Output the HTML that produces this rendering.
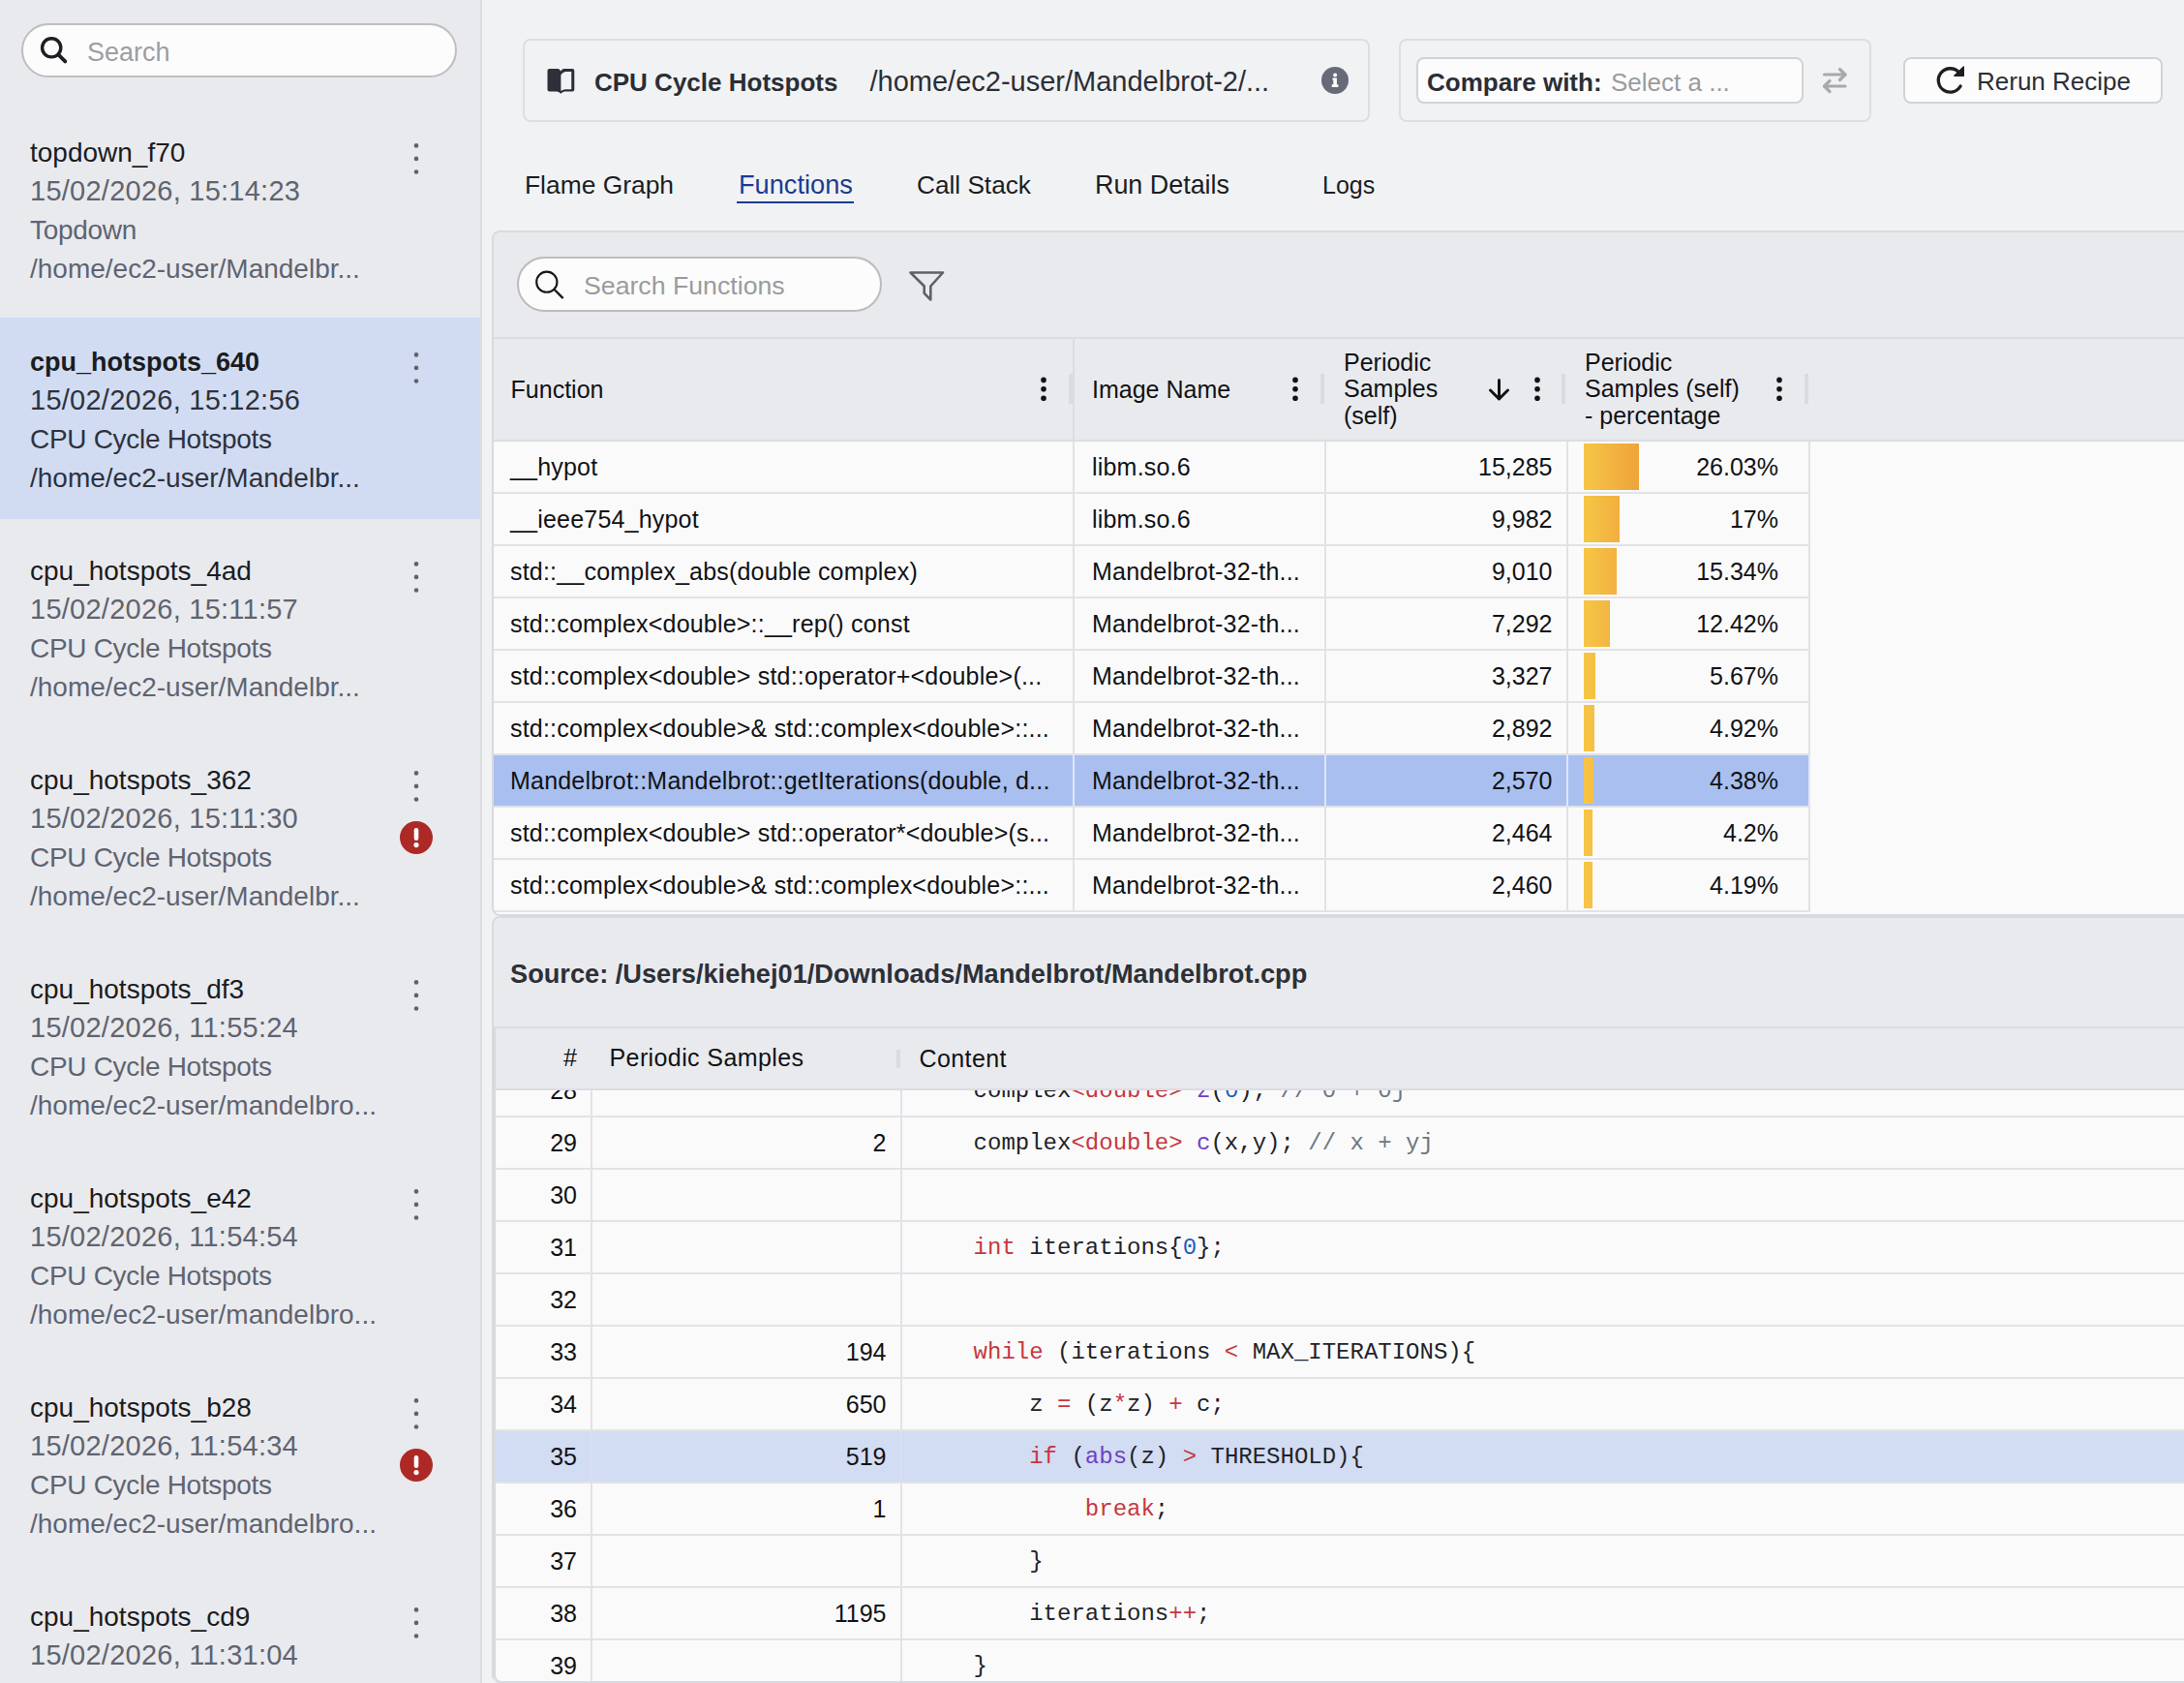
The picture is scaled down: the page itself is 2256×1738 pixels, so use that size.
<!DOCTYPE html><html><head><meta charset="utf-8"><style>
html,body{margin:0;padding:0;overflow:hidden;}
body{width:2256px;height:1738px;overflow:hidden;position:relative;background:#f1f2f4;font-family:"Liberation Sans",sans-serif;}
.t{position:absolute;white-space:pre;}
.b{position:absolute;box-sizing:border-box;}
svg{position:absolute;overflow:visible;}
</style></head><body>
<div class="b" style="left:0px;top:0px;width:496px;height:1738px;background:#e9eaee;"></div>
<div class="b" style="left:496px;top:0px;width:2px;height:1738px;background:#dcdde1;"></div>
<div class="b" style="left:22px;top:24px;width:450px;height:56px;background:#fcfcfd;border:2px solid #bebec0;border-radius:28px;"></div>
<div class="t" style="left:90.00px;top:36.64px;font-size:27px;line-height:34px;color:#9d9ea2;font-weight:400;font-family:'Liberation Sans', sans-serif;">Search</div>
<div class="t" style="left:31.00px;top:139.79px;font-size:28px;line-height:35px;color:#1b1c20;font-weight:400;font-family:'Liberation Sans', sans-serif;">topdown_f70</div>
<div class="t" style="left:31.00px;top:178.95px;font-size:29px;line-height:36px;color:#5f6470;font-weight:400;font-family:'Liberation Sans', sans-serif;letter-spacing:0.25px;">15/02/2026, 15:14:23</div>
<div class="t" style="left:31.00px;top:219.79px;font-size:28px;line-height:35px;color:#5f6470;font-weight:400;font-family:'Liberation Sans', sans-serif;letter-spacing:-0.3px;">Topdown</div>
<div class="t" style="left:31.00px;top:259.79px;font-size:28px;line-height:35px;color:#5f6470;font-weight:400;font-family:'Liberation Sans', sans-serif;">/home/ec2-user/Mandelbr...</div>
<div class="b" style="left:0px;top:328px;width:496px;height:208px;background:#d1dcf3;"></div>
<div class="t" style="left:31.00px;top:356.64px;font-size:27px;line-height:34px;color:#1b1c20;font-weight:700;font-family:'Liberation Sans', sans-serif;">cpu_hotspots_640</div>
<div class="t" style="left:31.00px;top:394.95px;font-size:29px;line-height:36px;color:#2e323b;font-weight:400;font-family:'Liberation Sans', sans-serif;letter-spacing:0.25px;">15/02/2026, 15:12:56</div>
<div class="t" style="left:31.00px;top:435.79px;font-size:28px;line-height:35px;color:#2e323b;font-weight:400;font-family:'Liberation Sans', sans-serif;letter-spacing:-0.3px;">CPU Cycle Hotspots</div>
<div class="t" style="left:31.00px;top:475.79px;font-size:28px;line-height:35px;color:#2e323b;font-weight:400;font-family:'Liberation Sans', sans-serif;">/home/ec2-user/Mandelbr...</div>
<div class="t" style="left:31.00px;top:571.79px;font-size:28px;line-height:35px;color:#1b1c20;font-weight:400;font-family:'Liberation Sans', sans-serif;">cpu_hotspots_4ad</div>
<div class="t" style="left:31.00px;top:610.95px;font-size:29px;line-height:36px;color:#5f6470;font-weight:400;font-family:'Liberation Sans', sans-serif;letter-spacing:0.25px;">15/02/2026, 15:11:57</div>
<div class="t" style="left:31.00px;top:651.79px;font-size:28px;line-height:35px;color:#5f6470;font-weight:400;font-family:'Liberation Sans', sans-serif;letter-spacing:-0.3px;">CPU Cycle Hotspots</div>
<div class="t" style="left:31.00px;top:691.79px;font-size:28px;line-height:35px;color:#5f6470;font-weight:400;font-family:'Liberation Sans', sans-serif;">/home/ec2-user/Mandelbr...</div>
<div class="t" style="left:31.00px;top:787.79px;font-size:28px;line-height:35px;color:#1b1c20;font-weight:400;font-family:'Liberation Sans', sans-serif;">cpu_hotspots_362</div>
<div class="t" style="left:31.00px;top:826.95px;font-size:29px;line-height:36px;color:#5f6470;font-weight:400;font-family:'Liberation Sans', sans-serif;letter-spacing:0.25px;">15/02/2026, 15:11:30</div>
<div class="t" style="left:31.00px;top:867.79px;font-size:28px;line-height:35px;color:#5f6470;font-weight:400;font-family:'Liberation Sans', sans-serif;letter-spacing:-0.3px;">CPU Cycle Hotspots</div>
<div class="t" style="left:31.00px;top:907.79px;font-size:28px;line-height:35px;color:#5f6470;font-weight:400;font-family:'Liberation Sans', sans-serif;">/home/ec2-user/Mandelbr...</div>
<div class="t" style="left:31.00px;top:1003.79px;font-size:28px;line-height:35px;color:#1b1c20;font-weight:400;font-family:'Liberation Sans', sans-serif;">cpu_hotspots_df3</div>
<div class="t" style="left:31.00px;top:1042.95px;font-size:29px;line-height:36px;color:#5f6470;font-weight:400;font-family:'Liberation Sans', sans-serif;letter-spacing:0.25px;">15/02/2026, 11:55:24</div>
<div class="t" style="left:31.00px;top:1083.79px;font-size:28px;line-height:35px;color:#5f6470;font-weight:400;font-family:'Liberation Sans', sans-serif;letter-spacing:-0.3px;">CPU Cycle Hotspots</div>
<div class="t" style="left:31.00px;top:1123.79px;font-size:28px;line-height:35px;color:#5f6470;font-weight:400;font-family:'Liberation Sans', sans-serif;">/home/ec2-user/mandelbro...</div>
<div class="t" style="left:31.00px;top:1219.79px;font-size:28px;line-height:35px;color:#1b1c20;font-weight:400;font-family:'Liberation Sans', sans-serif;">cpu_hotspots_e42</div>
<div class="t" style="left:31.00px;top:1258.95px;font-size:29px;line-height:36px;color:#5f6470;font-weight:400;font-family:'Liberation Sans', sans-serif;letter-spacing:0.25px;">15/02/2026, 11:54:54</div>
<div class="t" style="left:31.00px;top:1299.79px;font-size:28px;line-height:35px;color:#5f6470;font-weight:400;font-family:'Liberation Sans', sans-serif;letter-spacing:-0.3px;">CPU Cycle Hotspots</div>
<div class="t" style="left:31.00px;top:1339.79px;font-size:28px;line-height:35px;color:#5f6470;font-weight:400;font-family:'Liberation Sans', sans-serif;">/home/ec2-user/mandelbro...</div>
<div class="t" style="left:31.00px;top:1435.79px;font-size:28px;line-height:35px;color:#1b1c20;font-weight:400;font-family:'Liberation Sans', sans-serif;">cpu_hotspots_b28</div>
<div class="t" style="left:31.00px;top:1474.95px;font-size:29px;line-height:36px;color:#5f6470;font-weight:400;font-family:'Liberation Sans', sans-serif;letter-spacing:0.25px;">15/02/2026, 11:54:34</div>
<div class="t" style="left:31.00px;top:1515.79px;font-size:28px;line-height:35px;color:#5f6470;font-weight:400;font-family:'Liberation Sans', sans-serif;letter-spacing:-0.3px;">CPU Cycle Hotspots</div>
<div class="t" style="left:31.00px;top:1555.79px;font-size:28px;line-height:35px;color:#5f6470;font-weight:400;font-family:'Liberation Sans', sans-serif;">/home/ec2-user/mandelbro...</div>
<div class="t" style="left:31.00px;top:1651.79px;font-size:28px;line-height:35px;color:#1b1c20;font-weight:400;font-family:'Liberation Sans', sans-serif;">cpu_hotspots_cd9</div>
<div class="t" style="left:31.00px;top:1690.95px;font-size:29px;line-height:36px;color:#5f6470;font-weight:400;font-family:'Liberation Sans', sans-serif;letter-spacing:0.25px;">15/02/2026, 11:31:04</div>
<div class="t" style="left:31.00px;top:1731.79px;font-size:28px;line-height:35px;color:#5f6470;font-weight:400;font-family:'Liberation Sans', sans-serif;letter-spacing:-0.3px;">CPU Cycle Hotspots</div>
<div class="t" style="left:31.00px;top:1771.79px;font-size:28px;line-height:35px;color:#5f6470;font-weight:400;font-family:'Liberation Sans', sans-serif;">/home/ec2-user/mandelbro...</div>
<div class="b" style="left:540px;top:40px;width:875px;height:86px;background:transparent;border:2px solid #dddee2;border-radius:8px;"></div>
<div class="t" style="left:614.00px;top:68.69px;font-size:26px;line-height:32px;color:#2b2e35;font-weight:700;font-family:'Liberation Sans', sans-serif;">CPU Cycle Hotspots</div>
<div class="t" style="left:898.50px;top:66.35px;font-size:29px;line-height:36px;color:#2b2e35;font-weight:400;font-family:'Liberation Sans', sans-serif;">/home/ec2-user/Mandelbrot-2/...</div>
<div class="b" style="left:1445px;top:40px;width:488px;height:86px;background:transparent;border:2px solid #dddee2;border-radius:8px;"></div>
<div class="b" style="left:1463px;top:59px;width:400px;height:48px;background:#fcfcfd;border:2px solid #d2d3d7;border-radius:8px;"></div>
<div class="t" style="left:1474.00px;top:69.29px;font-size:26px;line-height:32px;color:#2b2e35;font-weight:700;font-family:'Liberation Sans', sans-serif;">Compare with:</div>
<div class="t" style="left:1664.00px;top:69.29px;font-size:26px;line-height:32px;color:#9a9b9e;font-weight:400;font-family:'Liberation Sans', sans-serif;">Select a ...</div>
<div class="b" style="left:1966px;top:59px;width:268px;height:48px;background:#fcfcfd;border:2px solid #d2d3d7;border-radius:8px;"></div>
<div class="t" style="left:2042.00px;top:67.99px;font-size:26px;line-height:32px;color:#2b2e35;font-weight:400;font-family:'Liberation Sans', sans-serif;">Rerun Recipe</div>
<div class="t" style="left:542.00px;top:174.55px;font-size:26.4px;line-height:33px;color:#1c1d21;font-weight:400;font-family:'Liberation Sans', sans-serif;">Flame Graph</div>
<div class="t" style="left:763.00px;top:173.77px;font-size:27.2px;line-height:34px;color:#1d3a90;font-weight:400;font-family:'Liberation Sans', sans-serif;">Functions</div>
<div class="b" style="left:761px;top:208px;width:121px;height:2px;background:#1d3a90;"></div>
<div class="t" style="left:947.00px;top:174.62px;font-size:26.2px;line-height:33px;color:#1c1d21;font-weight:400;font-family:'Liberation Sans', sans-serif;">Call Stack</div>
<div class="t" style="left:1131.00px;top:173.87px;font-size:26.9px;line-height:34px;color:#1c1d21;font-weight:400;font-family:'Liberation Sans', sans-serif;">Run Details</div>
<div class="t" style="left:1366.00px;top:176.03px;font-size:25px;line-height:31px;color:#1c1d21;font-weight:400;font-family:'Liberation Sans', sans-serif;">Logs</div>
<div style="position:absolute;left:0;top:0;width:2400px;height:1738px;clip-path:inset(238px 0 792px 508px round 8px)">
<div class="b" style="left:508px;top:238px;width:1800px;height:708px;background:#e9eaee;"></div>
<div class="b" style="left:534px;top:265px;width:377px;height:57px;background:#fcfcfc;border:2px solid #bcbcbe;border-radius:28.5px;"></div>
<div class="t" style="left:603.00px;top:278.94px;font-size:26.7px;line-height:33px;color:#9a9b9e;font-weight:400;font-family:'Liberation Sans', sans-serif;">Search Functions</div>
<div class="b" style="left:510px;top:348px;width:1746px;height:2px;background:#dcdde2;"></div>
<div class="b" style="left:510px;top:350px;width:1746px;height:104px;background:#e9eaee;"></div>
<div class="b" style="left:510px;top:454px;width:1746px;height:2px;background:#dcdde2;"></div>
<div class="b" style="left:1108px;top:350px;width:2px;height:104px;background:#dcdde2;"></div>
<div class="t" style="left:527.60px;top:386.63px;font-size:25px;line-height:31px;color:#111214;font-weight:400;font-family:'Liberation Sans', sans-serif;">Function</div>
<div class="t" style="left:1128.00px;top:386.83px;font-size:25px;line-height:31px;color:#111214;font-weight:400;font-family:'Liberation Sans', sans-serif;">Image Name</div>
<div class="t" style="left:1388.00px;top:358.83px;font-size:25px;line-height:31px;color:#111214;font-weight:400;font-family:'Liberation Sans', sans-serif;">Periodic</div>
<div class="t" style="left:1388.00px;top:386.43px;font-size:25px;line-height:31px;color:#111214;font-weight:400;font-family:'Liberation Sans', sans-serif;">Samples</div>
<div class="t" style="left:1388.00px;top:414.03px;font-size:25px;line-height:31px;color:#111214;font-weight:400;font-family:'Liberation Sans', sans-serif;">(self)</div>
<div class="t" style="left:1637.00px;top:358.53px;font-size:25px;line-height:31px;color:#111214;font-weight:400;font-family:'Liberation Sans', sans-serif;">Periodic</div>
<div class="t" style="left:1637.00px;top:386.13px;font-size:25px;line-height:31px;color:#111214;font-weight:400;font-family:'Liberation Sans', sans-serif;">Samples (self)</div>
<div class="t" style="left:1637.00px;top:414.13px;font-size:25px;line-height:31px;color:#111214;font-weight:400;font-family:'Liberation Sans', sans-serif;">- percentage</div>
<div class="b" style="left:1104px;top:386px;width:4px;height:31px;background:#dadbdf;"></div>
<div class="b" style="left:1364px;top:386px;width:4px;height:31px;background:#dadbdf;"></div>
<div class="b" style="left:1613px;top:386px;width:4px;height:31px;background:#dadbdf;"></div>
<div class="b" style="left:1864px;top:386px;width:4px;height:31px;background:#dadbdf;"></div>
<div class="b" style="left:510px;top:456px;width:1746px;height:488px;background:#fafafb;"></div>
<div class="b" style="left:510px;top:508px;width:1360px;height:2px;background:#e2e3e7;"></div>
<div class="t" style="left:527.00px;top:466.83px;font-size:25px;line-height:31px;color:#111214;font-weight:400;font-family:'Liberation Sans', sans-serif;letter-spacing:0.2px;">__hypot</div>
<div class="t" style="left:1128.00px;top:466.83px;font-size:25px;line-height:31px;color:#111214;font-weight:400;font-family:'Liberation Sans', sans-serif;letter-spacing:0.2px;">libm.so.6</div>
<div class="t" style="left:403.50px;width:1200px;text-align:right;top:466.83px;font-size:25px;line-height:31px;color:#111214;font-weight:400;font-family:'Liberation Sans', sans-serif;">15,285</div>
<div class="b" style="left:1636px;top:458px;width:57px;height:48px;background:linear-gradient(90deg,#f6c646,#efa33b);background-size:57px 100%;background-repeat:no-repeat;"></div>
<div class="t" style="left:637.00px;width:1200px;text-align:right;top:466.83px;font-size:25px;line-height:31px;color:#111214;font-weight:400;font-family:'Liberation Sans', sans-serif;">26.03%</div>
<div class="b" style="left:510px;top:562px;width:1360px;height:2px;background:#e2e3e7;"></div>
<div class="t" style="left:527.00px;top:520.83px;font-size:25px;line-height:31px;color:#111214;font-weight:400;font-family:'Liberation Sans', sans-serif;letter-spacing:0.2px;">__ieee754_hypot</div>
<div class="t" style="left:1128.00px;top:520.83px;font-size:25px;line-height:31px;color:#111214;font-weight:400;font-family:'Liberation Sans', sans-serif;letter-spacing:0.2px;">libm.so.6</div>
<div class="t" style="left:403.50px;width:1200px;text-align:right;top:520.83px;font-size:25px;line-height:31px;color:#111214;font-weight:400;font-family:'Liberation Sans', sans-serif;">9,982</div>
<div class="b" style="left:1636px;top:512px;width:37px;height:48px;background:linear-gradient(90deg,#f6c646,#efa33b);background-size:57px 100%;background-repeat:no-repeat;"></div>
<div class="t" style="left:637.00px;width:1200px;text-align:right;top:520.83px;font-size:25px;line-height:31px;color:#111214;font-weight:400;font-family:'Liberation Sans', sans-serif;">17%</div>
<div class="b" style="left:510px;top:616px;width:1360px;height:2px;background:#e2e3e7;"></div>
<div class="t" style="left:527.00px;top:574.83px;font-size:25px;line-height:31px;color:#111214;font-weight:400;font-family:'Liberation Sans', sans-serif;letter-spacing:0.2px;">std::__complex_abs(double complex)</div>
<div class="t" style="left:1128.00px;top:574.83px;font-size:25px;line-height:31px;color:#111214;font-weight:400;font-family:'Liberation Sans', sans-serif;letter-spacing:0.2px;">Mandelbrot-32-th...</div>
<div class="t" style="left:403.50px;width:1200px;text-align:right;top:574.83px;font-size:25px;line-height:31px;color:#111214;font-weight:400;font-family:'Liberation Sans', sans-serif;">9,010</div>
<div class="b" style="left:1636px;top:566px;width:34px;height:48px;background:linear-gradient(90deg,#f6c646,#efa33b);background-size:57px 100%;background-repeat:no-repeat;"></div>
<div class="t" style="left:637.00px;width:1200px;text-align:right;top:574.83px;font-size:25px;line-height:31px;color:#111214;font-weight:400;font-family:'Liberation Sans', sans-serif;">15.34%</div>
<div class="b" style="left:510px;top:670px;width:1360px;height:2px;background:#e2e3e7;"></div>
<div class="t" style="left:527.00px;top:628.83px;font-size:25px;line-height:31px;color:#111214;font-weight:400;font-family:'Liberation Sans', sans-serif;letter-spacing:0.2px;">std::complex&lt;double&gt;::__rep() const</div>
<div class="t" style="left:1128.00px;top:628.83px;font-size:25px;line-height:31px;color:#111214;font-weight:400;font-family:'Liberation Sans', sans-serif;letter-spacing:0.2px;">Mandelbrot-32-th...</div>
<div class="t" style="left:403.50px;width:1200px;text-align:right;top:628.83px;font-size:25px;line-height:31px;color:#111214;font-weight:400;font-family:'Liberation Sans', sans-serif;">7,292</div>
<div class="b" style="left:1636px;top:620px;width:27px;height:48px;background:linear-gradient(90deg,#f6c646,#efa33b);background-size:57px 100%;background-repeat:no-repeat;"></div>
<div class="t" style="left:637.00px;width:1200px;text-align:right;top:628.83px;font-size:25px;line-height:31px;color:#111214;font-weight:400;font-family:'Liberation Sans', sans-serif;">12.42%</div>
<div class="b" style="left:510px;top:724px;width:1360px;height:2px;background:#e2e3e7;"></div>
<div class="t" style="left:527.00px;top:682.83px;font-size:25px;line-height:31px;color:#111214;font-weight:400;font-family:'Liberation Sans', sans-serif;letter-spacing:0.2px;">std::complex&lt;double&gt; std::operator+&lt;double&gt;(...</div>
<div class="t" style="left:1128.00px;top:682.83px;font-size:25px;line-height:31px;color:#111214;font-weight:400;font-family:'Liberation Sans', sans-serif;letter-spacing:0.2px;">Mandelbrot-32-th...</div>
<div class="t" style="left:403.50px;width:1200px;text-align:right;top:682.83px;font-size:25px;line-height:31px;color:#111214;font-weight:400;font-family:'Liberation Sans', sans-serif;">3,327</div>
<div class="b" style="left:1636px;top:674px;width:12px;height:48px;background:linear-gradient(90deg,#f6c646,#efa33b);background-size:57px 100%;background-repeat:no-repeat;"></div>
<div class="t" style="left:637.00px;width:1200px;text-align:right;top:682.83px;font-size:25px;line-height:31px;color:#111214;font-weight:400;font-family:'Liberation Sans', sans-serif;">5.67%</div>
<div class="b" style="left:510px;top:778px;width:1360px;height:2px;background:#e2e3e7;"></div>
<div class="t" style="left:527.00px;top:736.83px;font-size:25px;line-height:31px;color:#111214;font-weight:400;font-family:'Liberation Sans', sans-serif;letter-spacing:0.2px;">std::complex&lt;double&gt;&amp; std::complex&lt;double&gt;::...</div>
<div class="t" style="left:1128.00px;top:736.83px;font-size:25px;line-height:31px;color:#111214;font-weight:400;font-family:'Liberation Sans', sans-serif;letter-spacing:0.2px;">Mandelbrot-32-th...</div>
<div class="t" style="left:403.50px;width:1200px;text-align:right;top:736.83px;font-size:25px;line-height:31px;color:#111214;font-weight:400;font-family:'Liberation Sans', sans-serif;">2,892</div>
<div class="b" style="left:1636px;top:728px;width:11px;height:48px;background:linear-gradient(90deg,#f6c646,#efa33b);background-size:57px 100%;background-repeat:no-repeat;"></div>
<div class="t" style="left:637.00px;width:1200px;text-align:right;top:736.83px;font-size:25px;line-height:31px;color:#111214;font-weight:400;font-family:'Liberation Sans', sans-serif;">4.92%</div>
<div class="b" style="left:510px;top:780px;width:1360px;height:52px;background:#a9bff0;"></div>
<div class="b" style="left:510px;top:832px;width:1360px;height:2px;background:#e2e3e7;"></div>
<div class="t" style="left:527.00px;top:790.83px;font-size:25px;line-height:31px;color:#111214;font-weight:400;font-family:'Liberation Sans', sans-serif;letter-spacing:0.2px;">Mandelbrot::Mandelbrot::getIterations(double, d...</div>
<div class="t" style="left:1128.00px;top:790.83px;font-size:25px;line-height:31px;color:#111214;font-weight:400;font-family:'Liberation Sans', sans-serif;letter-spacing:0.2px;">Mandelbrot-32-th...</div>
<div class="t" style="left:403.50px;width:1200px;text-align:right;top:790.83px;font-size:25px;line-height:31px;color:#111214;font-weight:400;font-family:'Liberation Sans', sans-serif;">2,570</div>
<div class="b" style="left:1636px;top:782px;width:10px;height:48px;background:linear-gradient(90deg,#f6c646,#efa33b);background-size:57px 100%;background-repeat:no-repeat;"></div>
<div class="t" style="left:637.00px;width:1200px;text-align:right;top:790.83px;font-size:25px;line-height:31px;color:#111214;font-weight:400;font-family:'Liberation Sans', sans-serif;">4.38%</div>
<div class="b" style="left:510px;top:886px;width:1360px;height:2px;background:#e2e3e7;"></div>
<div class="t" style="left:527.00px;top:844.83px;font-size:25px;line-height:31px;color:#111214;font-weight:400;font-family:'Liberation Sans', sans-serif;letter-spacing:0.2px;">std::complex&lt;double&gt; std::operator*&lt;double&gt;(s...</div>
<div class="t" style="left:1128.00px;top:844.83px;font-size:25px;line-height:31px;color:#111214;font-weight:400;font-family:'Liberation Sans', sans-serif;letter-spacing:0.2px;">Mandelbrot-32-th...</div>
<div class="t" style="left:403.50px;width:1200px;text-align:right;top:844.83px;font-size:25px;line-height:31px;color:#111214;font-weight:400;font-family:'Liberation Sans', sans-serif;">2,464</div>
<div class="b" style="left:1636px;top:836px;width:9px;height:48px;background:linear-gradient(90deg,#f6c646,#efa33b);background-size:57px 100%;background-repeat:no-repeat;"></div>
<div class="t" style="left:637.00px;width:1200px;text-align:right;top:844.83px;font-size:25px;line-height:31px;color:#111214;font-weight:400;font-family:'Liberation Sans', sans-serif;">4.2%</div>
<div class="b" style="left:510px;top:940px;width:1360px;height:2px;background:#e2e3e7;"></div>
<div class="t" style="left:527.00px;top:898.83px;font-size:25px;line-height:31px;color:#111214;font-weight:400;font-family:'Liberation Sans', sans-serif;letter-spacing:0.2px;">std::complex&lt;double&gt;&amp; std::complex&lt;double&gt;::...</div>
<div class="t" style="left:1128.00px;top:898.83px;font-size:25px;line-height:31px;color:#111214;font-weight:400;font-family:'Liberation Sans', sans-serif;letter-spacing:0.2px;">Mandelbrot-32-th...</div>
<div class="t" style="left:403.50px;width:1200px;text-align:right;top:898.83px;font-size:25px;line-height:31px;color:#111214;font-weight:400;font-family:'Liberation Sans', sans-serif;">2,460</div>
<div class="b" style="left:1636px;top:890px;width:9px;height:48px;background:linear-gradient(90deg,#f6c646,#efa33b);background-size:57px 100%;background-repeat:no-repeat;"></div>
<div class="t" style="left:637.00px;width:1200px;text-align:right;top:898.83px;font-size:25px;line-height:31px;color:#111214;font-weight:400;font-family:'Liberation Sans', sans-serif;">4.19%</div>
<div class="b" style="left:1108px;top:456px;width:2px;height:486px;background:#e1e2e6;"></div>
<div class="b" style="left:1368px;top:456px;width:2px;height:486px;background:#e1e2e6;"></div>
<div class="b" style="left:1618px;top:456px;width:2px;height:486px;background:#e1e2e6;"></div>
<div class="b" style="left:1868px;top:456px;width:2px;height:486px;background:#e1e2e6;"></div>
<div class="b" style="left:1108px;top:780px;width:2px;height:52px;background:#dfe6f7;"></div>
<div class="b" style="left:1368px;top:780px;width:2px;height:52px;background:#dfe6f7;"></div>
<div class="b" style="left:1618px;top:780px;width:2px;height:52px;background:#dfe6f7;"></div>
<div class="b" style="left:1868px;top:780px;width:2px;height:52px;background:#dfe6f7;"></div>
<div class="b" style="left:1870px;top:940px;width:386px;height:4px;background:#fafafb;"></div>
<div class="b" style="left:508px;top:238px;width:1800px;height:708px;background:transparent;border:2px solid #d9dadf;border-radius:8px;"></div>
</div>
<div style="position:absolute;left:0;top:0;width:2400px;height:1738px;clip-path:inset(946px 0 0 508px round 8px)">
<div class="b" style="left:508px;top:946px;width:1800px;height:800px;background:#e9eaee;"></div>
<div class="t" style="left:527.00px;top:988.57px;font-size:27.2px;line-height:34px;color:#2d3037;font-weight:700;font-family:'Liberation Sans', sans-serif;">Source: /Users/kiehej01/Downloads/Mandelbrot/Mandelbrot.cpp</div>
<div class="b" style="left:510px;top:1060px;width:1746px;height:678px;background:#fafafb;border-left:2px solid #d9dadf;border-top:2px solid #dcdde2;border-bottom:2px solid #d9dadf;border-bottom-left-radius:8px;"></div>
<div class="b" style="left:512px;top:1152px;width:1744px;height:2px;background:#e2e3e7;"></div>
<div class="t" style="left:-604.00px;width:1200px;text-align:right;top:1110.83px;font-size:25px;line-height:31px;color:#111214;font-weight:400;font-family:'Liberation Sans', sans-serif;">28</div>
<div class="t" style="left:948.00px;top:1112.11px;font-size:24px;line-height:30px;color:#1f2328;font-weight:400;font-family:'Liberation Mono', monospace;"><span style="color:#1f2328">    complex</span><span style="color:#c5383f">&lt;double&gt;</span><span style="color:#1f2328"> </span><span style="color:#6f42c1">z</span><span style="color:#1f2328">(</span><span style="color:#1f5fbf">0</span><span style="color:#1f2328">); </span><span style="color:#6e7781">// 0 + 0j</span></div>
<div class="b" style="left:512px;top:1206px;width:1744px;height:2px;background:#e2e3e7;"></div>
<div class="t" style="left:-604.00px;width:1200px;text-align:right;top:1164.83px;font-size:25px;line-height:31px;color:#111214;font-weight:400;font-family:'Liberation Sans', sans-serif;">29</div>
<div class="t" style="left:-284.50px;width:1200px;text-align:right;top:1164.83px;font-size:25px;line-height:31px;color:#111214;font-weight:400;font-family:'Liberation Sans', sans-serif;">2</div>
<div class="t" style="left:948.00px;top:1166.11px;font-size:24px;line-height:30px;color:#1f2328;font-weight:400;font-family:'Liberation Mono', monospace;"><span style="color:#1f2328">    complex</span><span style="color:#c5383f">&lt;double&gt;</span><span style="color:#1f2328"> </span><span style="color:#6f42c1">c</span><span style="color:#1f2328">(x,y); </span><span style="color:#6e7781">// x + yj</span></div>
<div class="b" style="left:512px;top:1260px;width:1744px;height:2px;background:#e2e3e7;"></div>
<div class="t" style="left:-604.00px;width:1200px;text-align:right;top:1218.83px;font-size:25px;line-height:31px;color:#111214;font-weight:400;font-family:'Liberation Sans', sans-serif;">30</div>
<div class="b" style="left:512px;top:1314px;width:1744px;height:2px;background:#e2e3e7;"></div>
<div class="t" style="left:-604.00px;width:1200px;text-align:right;top:1272.83px;font-size:25px;line-height:31px;color:#111214;font-weight:400;font-family:'Liberation Sans', sans-serif;">31</div>
<div class="t" style="left:948.00px;top:1274.11px;font-size:24px;line-height:30px;color:#1f2328;font-weight:400;font-family:'Liberation Mono', monospace;"><span style="color:#1f2328">    </span><span style="color:#c5383f">int</span><span style="color:#1f2328"> iterations{</span><span style="color:#1f5fbf">0</span><span style="color:#1f2328">};</span></div>
<div class="b" style="left:512px;top:1368px;width:1744px;height:2px;background:#e2e3e7;"></div>
<div class="t" style="left:-604.00px;width:1200px;text-align:right;top:1326.83px;font-size:25px;line-height:31px;color:#111214;font-weight:400;font-family:'Liberation Sans', sans-serif;">32</div>
<div class="b" style="left:512px;top:1422px;width:1744px;height:2px;background:#e2e3e7;"></div>
<div class="t" style="left:-604.00px;width:1200px;text-align:right;top:1380.83px;font-size:25px;line-height:31px;color:#111214;font-weight:400;font-family:'Liberation Sans', sans-serif;">33</div>
<div class="t" style="left:-284.50px;width:1200px;text-align:right;top:1380.83px;font-size:25px;line-height:31px;color:#111214;font-weight:400;font-family:'Liberation Sans', sans-serif;">194</div>
<div class="t" style="left:948.00px;top:1382.11px;font-size:24px;line-height:30px;color:#1f2328;font-weight:400;font-family:'Liberation Mono', monospace;"><span style="color:#1f2328">    </span><span style="color:#c5383f">while</span><span style="color:#1f2328"> (iterations </span><span style="color:#c5383f">&lt;</span><span style="color:#1f2328"> MAX_ITERATIONS){</span></div>
<div class="b" style="left:512px;top:1476px;width:1744px;height:2px;background:#e2e3e7;"></div>
<div class="t" style="left:-604.00px;width:1200px;text-align:right;top:1434.83px;font-size:25px;line-height:31px;color:#111214;font-weight:400;font-family:'Liberation Sans', sans-serif;">34</div>
<div class="t" style="left:-284.50px;width:1200px;text-align:right;top:1434.83px;font-size:25px;line-height:31px;color:#111214;font-weight:400;font-family:'Liberation Sans', sans-serif;">650</div>
<div class="t" style="left:948.00px;top:1436.11px;font-size:24px;line-height:30px;color:#1f2328;font-weight:400;font-family:'Liberation Mono', monospace;"><span style="color:#1f2328">        z </span><span style="color:#c5383f">=</span><span style="color:#1f2328"> (z</span><span style="color:#c5383f">*</span><span style="color:#1f2328">z) </span><span style="color:#c5383f">+</span><span style="color:#1f2328"> c;</span></div>
<div class="b" style="left:512px;top:1530px;width:1744px;height:2px;background:#e2e3e7;"></div>
<div class="t" style="left:-604.00px;width:1200px;text-align:right;top:1488.83px;font-size:25px;line-height:31px;color:#111214;font-weight:400;font-family:'Liberation Sans', sans-serif;">35</div>
<div class="t" style="left:-284.50px;width:1200px;text-align:right;top:1488.83px;font-size:25px;line-height:31px;color:#111214;font-weight:400;font-family:'Liberation Sans', sans-serif;">519</div>
<div class="t" style="left:948.00px;top:1490.11px;font-size:24px;line-height:30px;color:#1f2328;font-weight:400;font-family:'Liberation Mono', monospace;"><span style="color:#1f2328">        </span><span style="color:#c5383f">if</span><span style="color:#1f2328"> (</span><span style="color:#6f42c1">abs</span><span style="color:#1f2328">(z) </span><span style="color:#c5383f">&gt;</span><span style="color:#1f2328"> THRESHOLD){</span></div>
<div class="b" style="left:512px;top:1584px;width:1744px;height:2px;background:#e2e3e7;"></div>
<div class="t" style="left:-604.00px;width:1200px;text-align:right;top:1542.83px;font-size:25px;line-height:31px;color:#111214;font-weight:400;font-family:'Liberation Sans', sans-serif;">36</div>
<div class="t" style="left:-284.50px;width:1200px;text-align:right;top:1542.83px;font-size:25px;line-height:31px;color:#111214;font-weight:400;font-family:'Liberation Sans', sans-serif;">1</div>
<div class="t" style="left:948.00px;top:1544.11px;font-size:24px;line-height:30px;color:#1f2328;font-weight:400;font-family:'Liberation Mono', monospace;"><span style="color:#1f2328">            </span><span style="color:#c5383f">break</span><span style="color:#1f2328">;</span></div>
<div class="b" style="left:512px;top:1638px;width:1744px;height:2px;background:#e2e3e7;"></div>
<div class="t" style="left:-604.00px;width:1200px;text-align:right;top:1596.83px;font-size:25px;line-height:31px;color:#111214;font-weight:400;font-family:'Liberation Sans', sans-serif;">37</div>
<div class="t" style="left:948.00px;top:1598.11px;font-size:24px;line-height:30px;color:#1f2328;font-weight:400;font-family:'Liberation Mono', monospace;"><span style="color:#1f2328">        }</span></div>
<div class="b" style="left:512px;top:1692px;width:1744px;height:2px;background:#e2e3e7;"></div>
<div class="t" style="left:-604.00px;width:1200px;text-align:right;top:1650.83px;font-size:25px;line-height:31px;color:#111214;font-weight:400;font-family:'Liberation Sans', sans-serif;">38</div>
<div class="t" style="left:-284.50px;width:1200px;text-align:right;top:1650.83px;font-size:25px;line-height:31px;color:#111214;font-weight:400;font-family:'Liberation Sans', sans-serif;">1195</div>
<div class="t" style="left:948.00px;top:1652.11px;font-size:24px;line-height:30px;color:#1f2328;font-weight:400;font-family:'Liberation Mono', monospace;"><span style="color:#1f2328">        iterations</span><span style="color:#c5383f">++</span><span style="color:#1f2328">;</span></div>
<div class="b" style="left:512px;top:1746px;width:1744px;height:2px;background:#e2e3e7;"></div>
<div class="t" style="left:-604.00px;width:1200px;text-align:right;top:1704.83px;font-size:25px;line-height:31px;color:#111214;font-weight:400;font-family:'Liberation Sans', sans-serif;">39</div>
<div class="t" style="left:948.00px;top:1706.11px;font-size:24px;line-height:30px;color:#1f2328;font-weight:400;font-family:'Liberation Mono', monospace;"><span style="color:#1f2328">    }</span></div>
<div class="b" style="left:610px;top:1126px;width:2px;height:610px;background:#e1e2e6;"></div>
<div class="b" style="left:930px;top:1126px;width:2px;height:610px;background:#e1e2e6;"></div>
<div class="b" style="left:512px;top:1478px;width:1744px;height:52px;background:#d2dcf3;"></div>
<div class="b" style="left:610px;top:1478px;width:2px;height:52px;background:#d8dff0;"></div>
<div class="b" style="left:930px;top:1478px;width:2px;height:52px;background:#d8dff0;"></div>
<div class="t" style="left:-604.00px;width:1200px;text-align:right;top:1488.83px;font-size:25px;line-height:31px;color:#111214;font-weight:400;font-family:'Liberation Sans', sans-serif;">35</div>
<div class="t" style="left:-284.50px;width:1200px;text-align:right;top:1488.83px;font-size:25px;line-height:31px;color:#111214;font-weight:400;font-family:'Liberation Sans', sans-serif;">519</div>
<div class="t" style="left:948.00px;top:1490.11px;font-size:24px;line-height:30px;color:#1f2328;font-weight:400;font-family:'Liberation Mono', monospace;"><span style="color:#1f2328">        </span><span style="color:#c5383f">if</span><span style="color:#1f2328"> (</span><span style="color:#6f42c1">abs</span><span style="color:#1f2328">(z) </span><span style="color:#c5383f">&gt;</span><span style="color:#1f2328"> THRESHOLD){</span></div>
<div class="b" style="left:512px;top:1062px;width:1744px;height:62px;background:#e9eaee;"></div>
<div class="b" style="left:512px;top:1124px;width:1744px;height:2px;background:#dcdde2;"></div>
<div class="t" style="left:-604.00px;width:1200px;text-align:right;top:1077.43px;font-size:25px;line-height:31px;color:#111214;font-weight:400;font-family:'Liberation Sans', sans-serif;">#</div>
<div class="t" style="left:629.50px;top:1077.43px;font-size:25px;line-height:31px;color:#111214;font-weight:400;font-family:'Liberation Sans', sans-serif;letter-spacing:0.4px;">Periodic Samples</div>
<div class="t" style="left:949.50px;top:1077.63px;font-size:25px;line-height:31px;color:#111214;font-weight:400;font-family:'Liberation Sans', sans-serif;letter-spacing:0.4px;">Content</div>
<div class="b" style="left:926px;top:1084px;width:4px;height:19px;background:#dadbdf;"></div>
<div class="b" style="left:508px;top:1736px;width:1748px;height:2px;background:#d9dadf;"></div>
<div class="b" style="left:508px;top:946px;width:1800px;height:800px;background:transparent;border:2px solid #d9dadf;border-radius:8px;"></div>
</div>
<svg width="2256" height="1738" style="left:0;top:0"><circle cx="53.2" cy="49.3" r="9.6" fill="none" stroke="#1d1e22" stroke-width="3.4"/><line x1="60.5" y1="56.6" x2="67.3" y2="63.4" stroke="#1d1e22" stroke-width="3.8" stroke-linecap="round"/><circle cx="430" cy="150.40" r="2.30" fill="#606267"/><circle cx="430" cy="163.90" r="2.30" fill="#606267"/><circle cx="430" cy="177.50" r="2.30" fill="#606267"/><circle cx="430" cy="366.40" r="2.30" fill="#606267"/><circle cx="430" cy="379.90" r="2.30" fill="#606267"/><circle cx="430" cy="393.50" r="2.30" fill="#606267"/><circle cx="430" cy="582.40" r="2.30" fill="#606267"/><circle cx="430" cy="595.90" r="2.30" fill="#606267"/><circle cx="430" cy="609.50" r="2.30" fill="#606267"/><circle cx="430" cy="798.40" r="2.30" fill="#606267"/><circle cx="430" cy="811.90" r="2.30" fill="#606267"/><circle cx="430" cy="825.50" r="2.30" fill="#606267"/><circle cx="430" cy="865" r="17" fill="#ad2925"/><rect x="427.7" y="855" width="4.6" height="13" rx="2.3" fill="#fff"/><circle cx="430" cy="872.6" r="2.6" fill="#fff"/><circle cx="430" cy="1014.40" r="2.30" fill="#606267"/><circle cx="430" cy="1027.90" r="2.30" fill="#606267"/><circle cx="430" cy="1041.50" r="2.30" fill="#606267"/><circle cx="430" cy="1230.40" r="2.30" fill="#606267"/><circle cx="430" cy="1243.90" r="2.30" fill="#606267"/><circle cx="430" cy="1257.50" r="2.30" fill="#606267"/><circle cx="430" cy="1446.40" r="2.30" fill="#606267"/><circle cx="430" cy="1459.90" r="2.30" fill="#606267"/><circle cx="430" cy="1473.50" r="2.30" fill="#606267"/><circle cx="430" cy="1513" r="17" fill="#ad2925"/><rect x="427.7" y="1503" width="4.6" height="13" rx="2.3" fill="#fff"/><circle cx="430" cy="1520.6" r="2.6" fill="#fff"/><circle cx="430" cy="1662.40" r="2.30" fill="#606267"/><circle cx="430" cy="1675.90" r="2.30" fill="#606267"/><circle cx="430" cy="1689.50" r="2.30" fill="#606267"/><path d="M567.6,71 L576.2,71 Q577.8,71 579.3,73.4 Q580.8,71 582.4,71 L591.2,71 Q593.3,71 593.3,73.1 L593.3,92.4 Q593.3,94.5 591.2,94.5 L583.2,94.5 Q581,94.8 579.3,96.7 Q577.6,94.8 575.4,94.5 L567.6,94.5 Q565.5,94.5 565.5,92.4 L565.5,73.1 Q565.5,71 567.6,71 Z" fill="#2d3038"/><path d="M579.4,77.2 Q581.5,74.2 584.2,74 L590.2,74 L590.2,92.2 L584,92.2 Q581.5,92.4 579.4,94 Z" fill="#f1f2f4"/><circle cx="1379" cy="83" r="14" fill="#676b77"/><circle cx="1379.1" cy="77.6" r="2" fill="#fff"/><path d="M1376.6,80.6 L1380.9,80.6 L1380.9,87.3 L1382.4,87.3 L1382.4,89.9 L1375.7,89.9 L1375.7,87.3 L1377.3,87.3 L1377.3,82.9 L1376.6,82.9 Z" fill="#fff"/><g stroke="#a9a9ab" stroke-width="3.2" stroke-linecap="round" stroke-linejoin="round" fill="none"><line x1="1884.5" y1="77" x2="1906" y2="77"/><polyline points="1900.5,71.5 1906,77 1900.5,82.5"/><line x1="1884.5" y1="89" x2="1906" y2="89"/><polyline points="1890,83.5 1884.5,89 1890,94.5"/></g><path d="M2023.4,74.6 A12.2,12.2 0 1 0 2025.1,89" fill="none" stroke="#1e1f23" stroke-width="3.3" stroke-linecap="round"/><path d="M2018.8,78.3 L2028.3,69 L2028.3,78.3 Z" fill="#1e1f23" stroke="#1e1f23" stroke-width="1.4" stroke-linejoin="round"/><circle cx="564.8" cy="291.2" r="10.6" fill="none" stroke="#151618" stroke-width="2.1"/><line x1="572.6" y1="299" x2="581" y2="307.4" stroke="#151618" stroke-width="2.3" stroke-linecap="round"/><path d="M940.5,281.5 L974,281.5 L961.3,295.5 L961.3,309.5 L954.7,302.8 L954.7,295.5 Z" fill="none" stroke="#5f6168" stroke-width="2.6" stroke-linejoin="round"/><circle cx="1078" cy="392.40" r="2.80" fill="#111214"/><circle cx="1078" cy="401.80" r="2.80" fill="#111214"/><circle cx="1078" cy="411.20" r="2.80" fill="#111214"/><circle cx="1338" cy="392.40" r="2.80" fill="#111214"/><circle cx="1338" cy="401.80" r="2.80" fill="#111214"/><circle cx="1338" cy="411.20" r="2.80" fill="#111214"/><circle cx="1588" cy="392.40" r="2.80" fill="#111214"/><circle cx="1588" cy="401.80" r="2.80" fill="#111214"/><circle cx="1588" cy="411.20" r="2.80" fill="#111214"/><circle cx="1838" cy="392.40" r="2.80" fill="#111214"/><circle cx="1838" cy="401.80" r="2.80" fill="#111214"/><circle cx="1838" cy="411.20" r="2.80" fill="#111214"/><g stroke="#111214" stroke-width="3" stroke-linecap="round" stroke-linejoin="round" fill="none"><line x1="1548.5" y1="392.5" x2="1548.5" y2="411.5"/><polyline points="1539.5,403 1548.5,412 1557.5,403"/></g></svg>
</body></html>
